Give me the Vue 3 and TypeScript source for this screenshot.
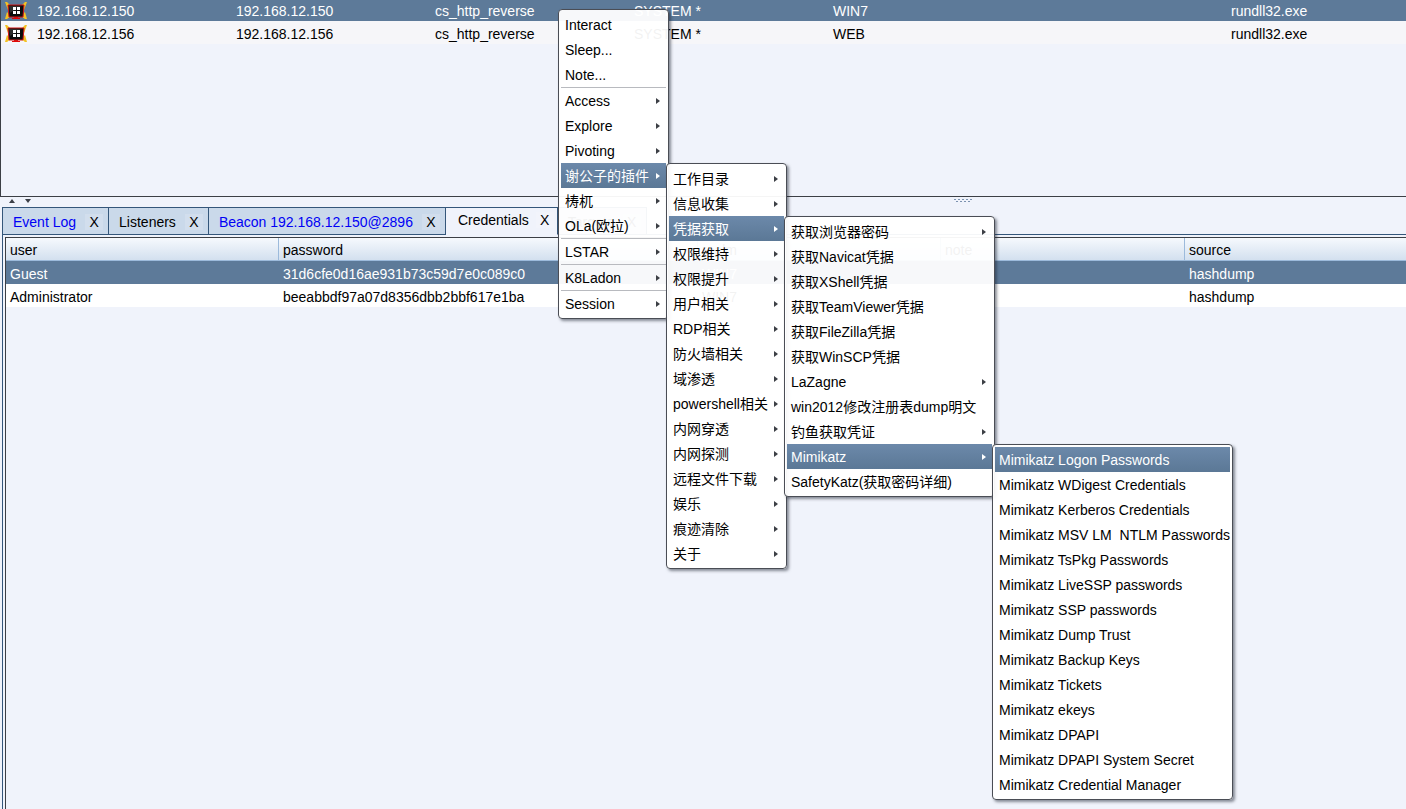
<script setup lang="ts">
import { defineComponent, h, type VNode } from 'vue'

interface Entry {
  label: string
  more?: boolean
  divided?: boolean
  children?: Entry[]
  size?: string
}

const parents = (labels: string[]): Entry[] => labels.map((label) => ({ label, more: true }))
const leaves = (labels: string[]): Entry[] => labels.map((label) => ({ label }))

const mimikatz = leaves([
  'Mimikatz Logon Passwords',
  'Mimikatz WDigest Credentials',
  'Mimikatz Kerberos Credentials',
  'Mimikatz MSV LM  NTLM Passwords',
  'Mimikatz TsPkg Passwords',
  'Mimikatz LiveSSP passwords',
  'Mimikatz SSP passwords',
  'Mimikatz Dump Trust',
  'Mimikatz Backup Keys',
  'Mimikatz Tickets',
  'Mimikatz ekeys',
  'Mimikatz DPAPI',
  'Mimikatz DPAPI System Secret',
  'Mimikatz Credential Manager',
])

const credentialMenu: Entry[] = [
  { label: '获取浏览器密码', more: true },
  ...leaves(['获取Navicat凭据', '获取XShell凭据', '获取TeamViewer凭据', '获取FileZilla凭据', '获取WinSCP凭据']),
  { label: 'LaZagne', more: true },
  { label: 'win2012修改注册表dump明文' },
  { label: '钓鱼获取凭证', more: true },
  { label: 'Mimikatz', more: true, children: mimikatz, size: 'menu-d' },
  { label: 'SafetyKatz(获取密码详细)' },
]

const pluginMenu: Entry[] = [
  ...parents(['工作目录', '信息收集']),
  { label: '凭据获取', more: true, children: credentialMenu, size: 'menu-c' },
  ...parents([
    '权限维持', '权限提升', '用户相关', 'RDP相关', '防火墙相关', '域渗透', 'powershell相关',
    '内网穿透', '内网探测', '远程文件下载', '娱乐', '痕迹清除', '关于',
  ]),
]

const rootMenu: Entry[] = [
  ...leaves(['Interact', 'Sleep...', 'Note...']),
  { label: 'Access', more: true, divided: true },
  ...parents(['Explore', 'Pivoting']),
  { label: '谢公子的插件', more: true, children: pluginMenu, size: 'menu-b' },
  ...parents(['梼杌', 'OLa(欧拉)']),
  { label: 'LSTAR', more: true, divided: true },
  { label: 'K8Ladon', more: true, divided: true },
  { label: 'Session', more: true, divided: true },
]

const PopupMenu = defineComponent({
  name: 'PopupMenu',
  props: { entries: { type: Array as () => Entry[], required: true } },
  setup(props) {
    const renderList = (entries: Entry[], size: string): VNode =>
      h('ul', { class: ['menu', size], role: 'menu' }, entries.map((e) => {
        const active = !!e.children || e.label === 'Mimikatz Logon Passwords'
        return h('li', { class: ['entry', { divided: e.divided }], role: 'none' }, [
          h('button', { type: 'button', role: 'menuitem', class: ['command', { active }] }, [
            h('span', e.label),
            e.more ? h('i', { class: 'arrow' }) : null,
          ]),
          e.children ? renderList(e.children, e.size ?? '') : null,
        ])
      }))
    return () => renderList(props.entries, 'menu-a')
  },
})

const sessions = [
  { external: '192.168.12.150', internal: '192.168.12.150', computer: 'WIN7', selected: true },
  { external: '192.168.12.156', internal: '192.168.12.156', computer: 'WEB', selected: false },
]

const tabs = [
  { title: 'Event Log', unread: true, current: false },
  { title: 'Listeners', unread: false, current: false },
  { title: 'Beacon 192.168.12.150@2896', unread: true, current: false },
  { title: 'Credentials', unread: false, current: true },
  { title: 'Targets', unread: false, current: false },
]

const credentials = [
  { user: 'Guest', password: '31d6cfe0d16ae931b73c59d7e0c089c0', realm: 'WIN7', source: 'hashdump', selected: true },
  { user: 'Administrator', password: 'beeabbdf97a07d8356dbb2bbf617e1ba', realm: 'WIN7', source: 'hashdump', selected: false },
]
</script>

<template>
  <main class="app">
    <section class="sessions">
      <table>
        <colgroup>
          <col class="c-icon"><col class="c-wide"><col class="c-wide"><col class="c-wide">
          <col class="c-wide"><col class="c-wide"><col class="c-wide"><col>
        </colgroup>
        <tbody>
          <tr v-for="s in sessions" :key="s.external" :class="{ selected: s.selected }">
            <td class="icon-cell">
              <svg width="22" height="18" viewBox="0 0 22 18" aria-hidden="true">
                <path d="M0 0h2l5 5-4 3z M22 0h-2l-5 5 4 3z M0 17l2-7 4 4-4 3z M22 17l-2-7-4 4 4 3z" fill="#f3c224" />
                <path d="M9 14h4v2h2v1H7v-1h2z" fill="#e00808" />
                <path d="M3 3h16l-1 12H4z" fill="#0b0b0b" stroke="#cf1616" />
                <path d="M4 4h12L5 11z" fill="#2c2c2c" />
                <path d="M8 5h3v3H8z M12 5h3v3h-3z M8 9h3v3H8z M12 9h3v3h-3z" fill="#fff" />
              </svg>
            </td>
            <td>{{ s.external }}</td>
            <td>{{ s.internal }}</td>
            <td>cs_http_reverse</td>
            <td>SYSTEM *</td>
            <td>{{ s.computer }}</td>
            <td></td>
            <td>rundll32.exe</td>
          </tr>
        </tbody>
      </table>
    </section>

    <div class="splitter">
      <svg class="collapse" width="24" height="4" viewBox="0 0 24 4" aria-hidden="true">
        <path d="M1 4 L4 0 L7 4Z M17 0h6l-3 4z" fill="#3c4048" />
      </svg>
      <svg class="grip" width="19" height="4" viewBox="0 0 19 4" aria-hidden="true">
        <path d="M0 0h2v1H0z M4 0h2v1H4z M8 0h2v1H8z M12 0h2v1h-2z M16 0h2v1h-2z M2 2h2v1H2z M6 2h2v1H6z M10 2h2v1h-2z M14 2h2v1h-2z" fill="#7c92b0" />
      </svg>
    </div>

    <section class="workspace">
      <nav class="tabs" role="tablist">
        <div v-for="t in tabs" :key="t.title" class="tab" :class="{ unread: t.unread, current: t.current }">
          <button type="button" role="tab" :aria-selected="t.current">{{ t.title }}</button>
          <button type="button" class="close" :aria-label="`Close ${t.title}`">X</button>
        </div>
        <div class="tab-rest"></div>
      </nav>
      <div class="credentials">
        <table>
          <colgroup>
            <col class="k-user"><col class="k-password"><col class="k-realm"><col class="k-note"><col>
          </colgroup>
          <thead>
            <tr><th>user</th><th>password</th><th>realm</th><th>note</th><th>source</th></tr>
          </thead>
          <tbody>
            <tr v-for="c in credentials" :key="c.user" :class="{ selected: c.selected }">
              <td>{{ c.user }}</td><td>{{ c.password }}</td><td>{{ c.realm }}</td><td></td><td>{{ c.source }}</td>
            </tr>
          </tbody>
        </table>
      </div>
    </section>

    <PopupMenu class="context" :entries="rootMenu" />
  </main>
</template>

<style>
body {
  background: #f0f3fb;
}

.app,
.app button {
  font-family: "Liberation Sans", Arial, "Noto Sans CJK SC", sans-serif;
  font-size: 14px;
}

.app .menu {
  position: absolute;
  left: 100%;
  top: 0;
  z-index: 1;
  box-sizing: border-box;
  margin: 0;
  padding: 2px;
  list-style: none;
  background: rgba(255, 255, 255, 0.95);
  border: 1px solid #4a4d55;
  border-radius: 4px;
  box-shadow: 2px 2px 3px rgba(30, 35, 50, 0.5);
}

.app .menu-a {
  left: 558px;
  top: 9px;
  width: 111px;
}

.app .menu-b {
  width: 121px;
}

.app .menu-c {
  width: 211px;
}

.app .menu-d {
  width: 241px;
}

.entry {
  position: relative;
}

.entry.divided {
  border-top: 1px solid #b8babf;
}

.command {
  display: flex;
  align-items: center;
  justify-content: space-between;
  width: 100%;
  height: 25px;
  padding: 0 6px 0 4px;
  border: 0;
  background: none;
  color: #000;
  text-align: left;
  white-space: pre;
}

.command span {
  height: 16px;
  line-height: 16px;
}

.command.active {
  background: linear-gradient(#6c89aa, #5b7896);
  color: #fff;
}

.arrow {
  flex: none;
  border: solid transparent;
  border-width: 3px 0 3px 4px;
  border-left-color: #3c3f45;
}

.active .arrow {
  border-left-color: #fff;
}
</style>

<style scoped>
.app {
  position: relative;
  display: flex;
  flex-direction: column;
  min-height: 100vh;
  overflow: hidden;
  background: #f0f3fb;
  color: #000;
}

table {
  width: 100%;
  table-layout: fixed;
  border-collapse: separate;
  border-spacing: 0;
}

td,
th {
  box-sizing: border-box;
  height: 23px;
  padding: 3px 4px 0;
  font-weight: normal;
  line-height: 20px;
  text-align: left;
  white-space: nowrap;
}

th {
  padding-top: 2px;
}

.selected td {
  background: #5d7a99;
  color: #fff;
}

.sessions {
  box-sizing: border-box;
  height: 197px;
  overflow: hidden;
  border-left: 1px solid #3c3f45;
  border-bottom: 1px solid #3c3f45;
}

.sessions table {
  margin-top: -2px;
}

.sessions tr:not(.selected) td {
  background: #f6f6f9;
}

.c-icon {
  width: 32px;
}

.c-wide {
  width: 199px;
}

.sessions .icon-cell {
  padding: 3px 4px 0;
}

.icon-cell svg {
  display: block;
}

.splitter {
  box-sizing: border-box;
  display: grid;
  grid-template-columns: 69fr auto 31fr;
  height: 10px;
  padding: 2px 8px 0;
}

.collapse {
  display: block;
}

.grip {
  display: block;
}

.workspace {
  flex: 1;
  display: flex;
  flex-direction: column;
  margin-left: 2px;
  border-left: 1px solid #34567a;
}

.tabs {
  display: flex;
  height: 28px;
}

.tab {
  display: flex;
  align-items: center;
  gap: 9px;
  padding: 2px 5px 0 10px;
  background: #cad9ea;
  border: solid #34567a;
  border-width: 1px 1px 1px 0;
}

.tab.current {
  padding: 0 3px 2px 12px;
  gap: 7px;
  background: none;
  border-bottom-color: transparent;
}

.tab button {
  padding: 0;
  border: 0;
  background: none;
  color: #000;
}

.tab.unread button:first-child {
  color: #0000f5;
}

.tab .close {
  width: 18px;
  background: rgba(255, 255, 255, 0.15);
}

.tab-rest {
  flex: 1;
  border-bottom: 1px solid #34567a;
}

.credentials {
  flex: 1;
  margin: 2px 0 0 2px;
  border-left: 1px solid #3c3f45;
  border-top: 1px solid #3c3f45;
}

.credentials th {
  background: linear-gradient(#f6f9fd, #d3e0ef);
  border-right: 1px solid #9cbadb;
  border-bottom: 1px solid #9cbadb;
}

.credentials th:last-child {
  border-right: 0;
}

.credentials tr:not(.selected) td {
  background: #fff;
}

.k-user {
  width: 273px;
}

.k-password {
  width: 419px;
}

.k-realm {
  width: 243px;
}

.k-note {
  width: 244px;
}
</style>
